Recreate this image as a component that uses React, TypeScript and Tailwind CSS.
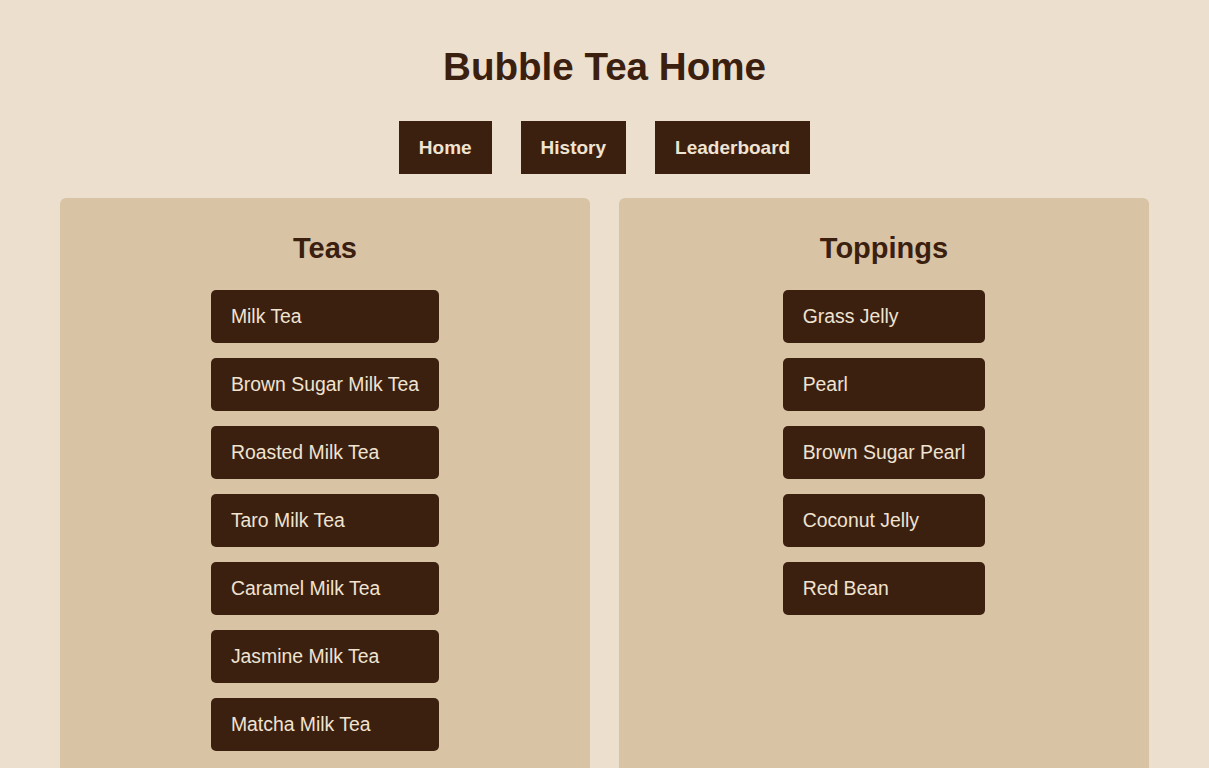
const teas = [
  "Milk Tea",
  "Brown Sugar Milk Tea",
  "Roasted Milk Tea",
  "Taro Milk Tea",
  "Caramel Milk Tea",
  "Jasmine Milk Tea",
  "Matcha Milk Tea",
];

const toppings = ["Grass Jelly", "Pearl", "Brown Sugar Pearl", "Coconut Jelly", "Red Bean"];

const Panel = ({ title, items }: { title: string; items: string[] }) => {
  return (
    <div className="flex-1 bg-[#d8c4a4] rounded-md pt-[30px] pb-10 flex flex-col items-center">
      <h2 className="text-[29px] font-bold text-[#3b2010] leading-[40px] mb-[22px]">{title}</h2>
      <div className="flex flex-col gap-[15px]">
        {items.map((item) => (
          <div
            key={item}
            className="bg-[#3b2010] text-[#f1e3d1] text-[19.4px] leading-[23px] pt-[15px] pb-[15px] px-5 rounded-[5px]"
          >
            {item}
          </div>
        ))}
      </div>
    </div>
  );
};

const App = () => {
  return (
    <div className="min-h-screen bg-[#ecdfce] font-['Liberation_Sans',Arial,sans-serif]">
      <h1 className="text-center text-[38.6px] font-bold text-[#3b2010] pt-[43px] leading-[48px]">
        Bubble Tea Home
      </h1>
      <nav className="flex justify-center gap-[29px] mt-[30px]">
        {["Home", "History", "Leaderboard"].map((label) => (
          <a
            key={label}
            href="#"
            className="bg-[#3b2010] text-[#f1e3d1] font-bold text-[19px] leading-[23px] py-[15px] px-5"
          >
            {label}
          </a>
        ))}
      </nav>
      <main className="flex gap-[29px] px-[60px] mt-6">
        <Panel title="Teas" items={teas} />
        <Panel title="Toppings" items={toppings} />
      </main>
    </div>
  );
};

export default App;
